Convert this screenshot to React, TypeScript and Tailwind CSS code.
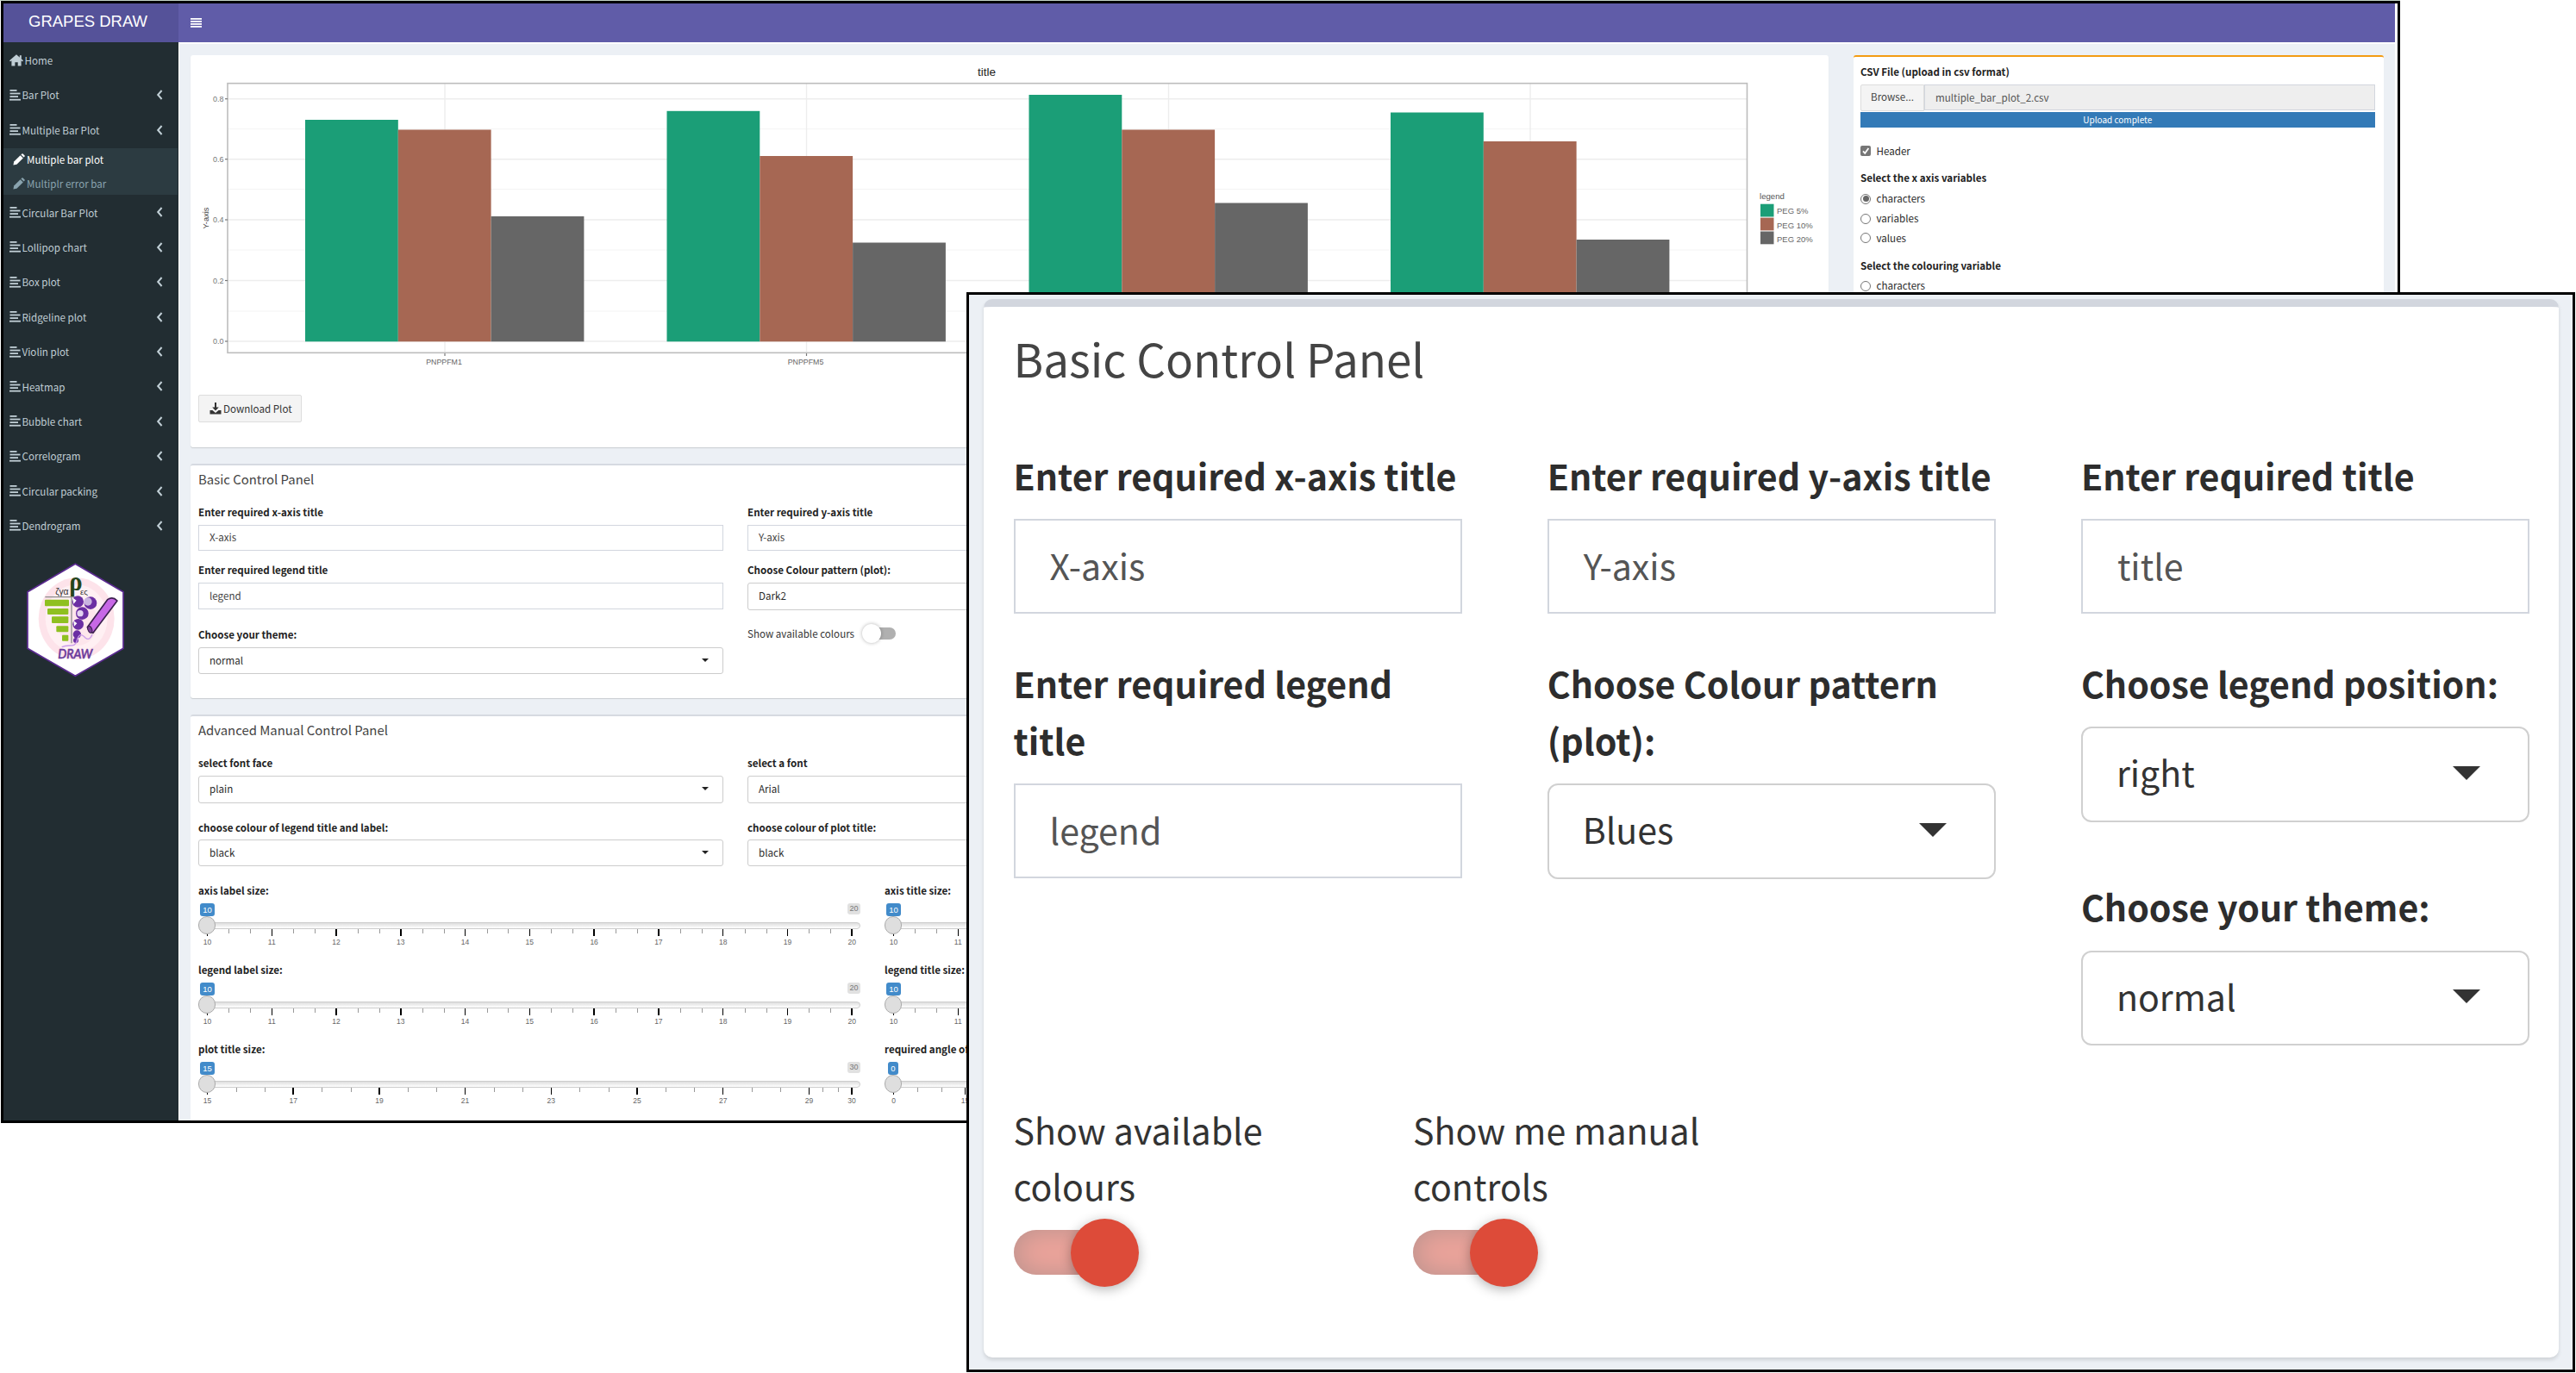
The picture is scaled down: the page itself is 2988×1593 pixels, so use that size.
import React from "react";

const menuTop = ["Bar Plot", "Multiple Bar Plot"];
const menuRest = [
  "Circular Bar Plot",
  "Lollipop chart",
  "Box plot",
  "Ridgeline plot",
  "Violin plot",
  "Heatmap",
  "Bubble chart",
  "Correlogram",
  "Circular packing",
  "Dendrogram",
];

/* ---------- icons ---------- */

function AlignIcon() {
  return (
    <svg viewBox="0 0 13 13" className="h-[13px] w-[13px] fill-current">
      <rect x="0.5" y="0" width="8" height="1.8" />
      <rect x="0.5" y="3.6" width="12" height="1.8" />
      <rect x="0.5" y="7.2" width="9.5" height="1.8" />
      <rect x="0" y="10.8" width="13" height="1.8" />
    </svg>
  );
}

function HomeIcon() {
  return (
    <svg viewBox="0 0 16 14" className="h-[14px] w-4 fill-current">
      <path d="M8 0.3 16 7.2 15 8.4 13.6 7.3V13.4H9.7V9.3H6.4V13.4H2.4V7.3L1 8.4 0 7.2Z" />
      <rect x="11.8" y="1.2" width="2" height="4" />
    </svg>
  );
}

function PencilIcon() {
  return (
    <svg viewBox="0 0 14 14" className="h-[14px] w-[14px] fill-current">
      <path d="M0.4 13.6 1.2 9.6 8.6 2.2 11.8 5.4 4.4 12.8Z" />
      <path d="M9.4 1.4 10.4 0.4Q11 0 11.6 0.4L13.6 2.4Q14 3 13.6 3.6L12.6 4.6Z" />
    </svg>
  );
}

function Chevron() {
  return (
    <svg viewBox="0 0 8 12" className="h-3 w-2 fill-none stroke-current stroke-2">
      <path d="M6.6 1 2.2 6l4.400 5" />
    </svg>
  );
}

function Logo() {
  return (
    <svg viewBox="0 0 480 480" className="mt-[9px] ml-[6px] h-40 w-40">
      <polygon points="232,46 399,143 399,340 232,436 66,340 66,143" fill="#fff" stroke="#5b2a91" strokeWidth="5" />
      <ellipse cx="236" cy="236" rx="132" ry="142" fill="#fde3ea" />
      <ellipse cx="236" cy="236" rx="108" ry="118" fill="#fff0f3" />
      <ellipse cx="240" cy="250" rx="70" ry="80" fill="#fde6ec" />
      <path d="M127 161H240M219 163V322" stroke="#8d8d8d" strokeWidth="4" fill="none" />
      <g fill="#8fc021">
        <rect x="126" y="170" width="84" height="23" rx="3" />
        <rect x="135" y="201" width="73" height="21" rx="3" />
        <rect x="150" y="229" width="58" height="23" rx="3" />
        <rect x="166" y="262" width="42" height="21" rx="3" />
        <rect x="186" y="293" width="22" height="21" rx="3" />
      </g>
      <g fill="#6b2fa3">
        <circle cx="241" cy="177" r="20" />
        <circle cx="285" cy="182" r="22" />
        <circle cx="256" cy="218" r="22" />
        <circle cx="242" cy="256" r="19" />
        <circle cx="238" cy="291" r="14" />
        <circle cx="234" cy="312" r="9" />
      </g>
      <circle cx="276" cy="177" r="14" fill="#c9b4e0" />
      <circle cx="249" cy="218" r="11" fill="#e4d4f0" />
      <path d="M222 163l14 10-10 12zM226 243l12 10-10 10z" fill="#fff" />
      <path d="M185 335c25-12 45 5 52-20 8-30 18-25 30-12 12 10 20 0 24-12" stroke="#c99aea" strokeWidth="4" fill="none" />
      <path d="M344 170Q362 158 378 174L294 286Q280 284 274 266Z" fill="#c768e6" stroke="#3c2150" strokeWidth="5" strokeLinejoin="round" />
      <ellipse cx="283" cy="274" rx="7" ry="12" fill="#7b3e98" stroke="#3c2150" strokeWidth="3" transform="rotate(-20 283 274)" />
      <text x="163" y="153" fontSize="31" fill="#333" fontFamily="Liberation Sans, sans-serif">ζγα</text>
      <text x="211" y="139" fontSize="92" fontWeight="bold" fill="#24451b" fontFamily="Liberation Serif, serif" textLength="46" lengthAdjust="spacingAndGlyphs">ρ</text>
      <text x="249" y="153" fontSize="29" fill="#333" fontFamily="Liberation Sans, sans-serif">ες</text>
      <text x="172" y="375" fontSize="48" fontStyle="italic" fill="#6a3a9c" stroke="#6a3a9c" strokeWidth="2" textLength="120" lengthAdjust="spacingAndGlyphs" fontFamily="Lato, sans-serif">DRAW</text>
    </svg>
  );
}

/* ---------- sidebar ---------- */

function MenuItem({ label }: { label: string }) {
  return (
    <li className="flex h-[40.4px] items-center pr-[18.5px] pl-[6.5px]">
      <AlignIcon />
      <span className="ml-[2px] grow pt-[2px]">{label}</span>
      <Chevron />
    </li>
  );
}

function Sidebar() {
  return (
    <aside className="w-[203px] shrink-0 bg-[#222d32] text-[11.6px] whitespace-nowrap text-[#c0ced5]">
      <ul>
        <li className="flex h-[41px] items-center pt-px pl-[6.5px]">
          <HomeIcon />
          <span className="ml-[2px] pt-[2px]">Home</span>
        </li>
        {menuTop.map((m) => (
          <MenuItem key={m} label={m} />
        ))}
        <ul className="mt-px mr-px h-[54.5px] bg-[#2c3b41] pl-[11px] text-[#8aa4af]">
          <li className="flex h-[27px] items-center gap-[2px] text-white">
            <PencilIcon />
            <span className="pt-[2px]">Multiple bar plot</span>
          </li>
          <li className="flex h-7 items-center gap-[2px]">
            <PencilIcon />
            <span className="pt-[2px]">Multiplr error bar</span>
          </li>
        </ul>
        {menuRest.map((m) => (
          <MenuItem key={m} label={m} />
        ))}
      </ul>
      <Logo />
    </aside>
  );
}

/* ---------- chart ---------- */

const groups = [
  { x: 354, label: "PNPPFM1", tops: [139, 150.5, 251] },
  { x: 773.5, label: "PNPPFM5", tops: [128.8, 181, 281.5] },
  { x: 1193.5, label: "", tops: [110, 150.5, 235.5] },
  { x: 1613, label: "", tops: [130.5, 164, 278] },
];
const barColors = ["#1b9e77", "#a66753", "#666666"];
const legendRows = ["PEG 5%", "PEG 10%", "PEG 20%"];
const ticksY: [string, number][] = [
  ["0.8", 114.7],
  ["0.6", 184.7],
  ["0.4", 255],
  ["0.2", 325.5],
  ["0.0", 396],
];

function Chart() {
  return (
    <svg viewBox="221 64 1900 394" className="block h-[394px] w-[1900px]" fontFamily="Liberation Sans, sans-serif">
      <text x="1144.5" y="87.5" fontSize="13.5" textAnchor="middle" fill="#222">title</text>
      {ticksY.map(([, y]) => (
        <path key={y} d={`M264 ${y}H2026`} stroke="#ededed" strokeWidth="1.4" />
      ))}
      {[149.7, 219.5, 290, 361].map((y) => (
        <path key={y} d={`M264 ${y}H2026`} stroke="#f4f4f4" strokeWidth="1" />
      ))}
      {groups.map((g) => (
        <g key={g.x}>
          <path d={`M${g.x + 162} 97V409`} stroke="#ededed" strokeWidth="1.4" />
          {g.tops.map((t, i) => (
            <rect key={i} x={g.x + i * 107.8} y={t} width="107.8" height={396.3 - t} fill={barColors[i]} />
          ))}
          <path d={`M${g.x + 162} 409v4`} stroke="#777" strokeWidth="1.2" />
          {g.label && (
            <text x={g.x + 161} y="423" fontSize="8.8" textAnchor="middle" fill="#666">{g.label}</text>
          )}
        </g>
      ))}
      <rect x="264" y="96.7" width="1762.5" height="312.6" fill="none" stroke="#bdbdbd" strokeWidth="1.6" />
      {ticksY.map(([t, y]) => (
        <g key={t}>
          <path d={`M261 ${y}h3`} stroke="#777" strokeWidth="1.2" />
          <text x="259.5" y={y + 3.3} fontSize="9" textAnchor="end" fill="#777">{t}</text>
        </g>
      ))}
      <text transform="translate(241.5 253) rotate(-90)" fontSize="9.3" textAnchor="middle" fill="#444">Y-axis</text>
      <text x="2041" y="231" fontSize="9.6" fill="#555">legend</text>
      {legendRows.map((l, i) => (
        <g key={l}>
          <rect x="2042" y={236.7 + i * 15.9} width="15.5" height="14.8" fill={barColors[i]} />
          <text x="2061" y={248.4 + i * 16.1} fontSize="9.5" fill="#666">{l}</text>
        </g>
      ))}
    </svg>
  );
}

/* ---------- small form pieces ---------- */

function Label({ children, className = "" }: { children: React.ReactNode; className?: string }) {
  return (
    <div className={`flex items-center font-bold whitespace-nowrap text-[#222] ${className}`}>
      <span className="pt-[2px]">{children}</span>
    </div>
  );
}

function Input({ value }: { value: string }) {
  return (
    <div className="flex h-[30.5px] items-center border border-[#d2d6de] pt-px pl-3 text-[#444]">{value}</div>
  );
}

function Select({ value }: { value: string }) {
  return (
    <div className="flex h-[31.5px] items-center rounded-[3px] border border-[#ccc] pr-4 pl-3 text-[#2a2a2a]">
      <span className="grow pt-px">{value}</span>
      <svg viewBox="0 0 8 4" className="mb-px h-1 w-2">
        <path d="M0 0h8L4 4z" fill="#222" />
      </svg>
    </div>
  );
}

type SliderProps = {
  label: string;
  badge: string;
  max: string;
  ticks: [number, string][];
  minor: number[];
  narrow?: boolean;
};

function Slider({ label, badge, max, ticks, minor, narrow }: SliderProps) {
  return (
    <div className="h-[92px] w-[768px]">
      <Label className="h-5">{label}</Label>
      <div className="relative h-[72px] font-['Liberation_Sans',sans-serif]">
        <div className="absolute top-[27px] left-[5px] h-2 w-[763px] rounded-[4px] border border-[#ccc] bg-gradient-to-b from-[#dedede] to-white" />
        {minor.map((x) => (
          <span key={x} className="absolute top-[35px] h-[5px] w-px bg-[#999]" style={{ left: x }} />
        ))}
        {ticks.map(([x, t]) => (
          <span key={x} className="absolute top-[35px] flex w-5 -translate-x-1/2 flex-col items-center" style={{ left: x }}>
            <span className="h-2 w-[1.5px] bg-black" />
            <span className="mt-[3px] text-[8.5px] leading-[9px] text-[#666]">{t}</span>
          </span>
        ))}
        <span
          className={`absolute top-[5px] flex h-[15px] items-center justify-center rounded-[3px] bg-[#428bca] text-[9.5px] text-white ${narrow ? "left-[4px] w-3" : "left-[2px] w-[17px]"}`}
        >
          {badge}
        </span>
        <span className="absolute top-[5px] right-0 flex h-[13px] w-[15px] items-center justify-center rounded-[3px] bg-[#e1e1e1] text-[9px] text-[#777]">
          {max}
        </span>
        <span className="absolute top-5 left-0 h-[21px] w-5 rounded-full border border-[#ababab] bg-[#dedede]" />
      </div>
    </div>
  );
}

const step = 74.77;
const tenTicks: [number, string][] = Array.from({ length: 11 }, (_, i) => [10.5 + i * step, String(10 + i)]);
const tenMinor = Array.from({ length: 30 }, (_, i) => i)
  .filter((i) => i % 3 !== 0)
  .map((i) => 10.5 + (i * step) / 3);
const plotTicks: [number, string][] = [
  ...[15, 17, 19, 21, 23, 25, 27, 29].map((v, i): [number, string] => [10.5 + i * 99.7, String(v)]),
  [758, "30"],
];
const plotMinor = [...Array.from({ length: 21 }, (_, i) => i).filter((i) => i % 3 !== 0).map((i) => 10.5 + i * 33.23), 724, 741.5];
const angleTicks: [number, string][] = Array.from({ length: 10 }, (_, i) => [10.5 + i * 83.1, String(i * 15)]);
const angleMinor = Array.from({ length: 27 }, (_, i) => i).filter((i) => i % 3 !== 0).map((i) => 10.5 + i * 27.7);

function Radio({ label, on }: { label: string; on?: boolean }) {
  return (
    <div className="flex h-[22.8px] items-center">
      <span className="flex h-3 w-3 items-center justify-center rounded-full border border-[#767676] bg-white">
        {on && <span className="h-[7px] w-[7px] rounded-full bg-[#666]" />}
      </span>
      <span className="ml-[6.5px]">{label}</span>
    </div>
  );
}

/* ---------- cards ---------- */

function BasicCard() {
  return (
    <section className="mt-[19.5px] h-[272px] rounded-[3px] border-t-2 border-[#d6dae1] bg-white pl-[9px] shadow-[0_1px_1px_rgba(0,0,0,0.15)]">
      <h3 className="flex h-[31px] items-center pt-px text-[14.9px] text-[#444]">Basic Control Panel</h3>
      <div className="mt-[7.5px] grid grid-cols-[608.5px_608.5px_608.5px] gap-x-[28.5px]">
        <div>
          <Label className="h-[30px]">Enter required x-axis title</Label>
          <Input value="X-axis" />
          <Label className="mt-[7px] h-[30px]">Enter required legend title</Label>
          <Input value="legend" />
          <Label className="mt-[14px] h-[30px]">Choose your theme:</Label>
          <Select value="normal" />
        </div>
        <div>
          <Label className="h-[30px]">Enter required y-axis title</Label>
          <Input value="Y-axis" />
          <Label className="mt-[7px] h-[30px]">Choose Colour pattern (plot):</Label>
          <Select value="Dark2" />
          <div className="mt-[12px] flex h-[30px] items-center text-[#333]">
            <span className="pt-[2px] whitespace-nowrap">Show available colours</span>
            <span className="relative ml-[16px] h-[14px] w-[32px] rounded-full bg-[#b0b0b0]">
              <span className="absolute -top-[4px] -left-[7px] h-[22px] w-[22px] rounded-full bg-white shadow-[0_0_4px_rgba(0,0,0,0.3)]" />
            </span>
          </div>
        </div>
      </div>
    </section>
  );
}

function AdvancedCard() {
  return (
    <section className="mt-[19px] h-[520px] rounded-[3px] border-t-2 border-[#d6dae1] bg-white pl-[9px]">
      <h3 className="flex h-[31px] items-center pt-px text-[14.9px] text-[#444]">Advanced Manual Control Panel</h3>
      <div className="mt-2 grid grid-cols-[608.5px_608.5px_608.5px] gap-x-[28.5px]">
        <div>
          <Label className="h-[30px]">select font face</Label>
          <Select value="plain" />
          <Label className="mt-[14px] h-[28px]">choose colour of legend title and label:</Label>
          <Select value="black" />
        </div>
        <div>
          <Label className="h-[30px]">select a font</Label>
          <Select value="Arial" />
          <Label className="mt-[14px] h-[28px]">choose colour of plot title:</Label>
          <Select value="black" />
        </div>
      </div>
      <div className="mt-[18px] grid grid-cols-[768px_768px] gap-x-[28px]">
        <Slider label="axis label size:" badge="10" max="20" ticks={tenTicks} minor={tenMinor} />
        <Slider label="axis title size:" badge="10" max="20" ticks={tenTicks} minor={tenMinor} />
        <Slider label="legend label size:" badge="10" max="20" ticks={tenTicks} minor={tenMinor} />
        <Slider label="legend title size:" badge="10" max="20" ticks={tenTicks} minor={tenMinor} />
        <Slider label="plot title size:" badge="15" max="30" ticks={plotTicks} minor={plotMinor} />
        <Slider label="required angle of axis label:" badge="0" max="135" ticks={angleTicks} minor={angleMinor} narrow />
      </div>
    </section>
  );
}

function UploadCard() {
  return (
    <section className="w-[614.5px] shrink-0 rounded-[3px] border-t-2 border-[#f39c12] bg-white pt-[2px] pr-[10px] pl-[8px] text-[#2a2a2a]">
      <Label className="h-[30px]">CSV File (upload in csv format)</Label>
      <div className="flex items-start">
        <span className="flex h-[31px] w-[74px] items-center justify-center rounded-l-[2px] border border-[#ddd] bg-[#f4f4f4] pb-px text-[#444]">
          Browse...
        </span>
        <span className="flex h-[30px] grow items-center border border-[#d2d6de] bg-[#eee] pt-[2px] pl-3 text-[#555]">
          multiple_bar_plot_2.csv
        </span>
      </div>
      <div className="mt-px flex h-[17.5px] items-center justify-center bg-[#337ab7] text-[10px] text-white">
        Upload complete
      </div>
      <div className="mt-4 flex h-[23px] items-center">
        <svg viewBox="0 0 12 12" className="h-3 w-3">
          <rect width="12" height="12" rx="2" fill="#767676" />
          <path d="M3 6.4 5.2 8.8 9.4 3" fill="none" stroke="#fff" strokeWidth="1.8" />
        </svg>
        <span className="ml-[6.5px] pt-[2px]">Header</span>
      </div>
      <Label className="mt-[6px] h-[27px]">Select the x axis variables</Label>
      <Radio label="characters" on />
      <Radio label="variables" />
      <Radio label="values" />
      <Label className="mt-[6px] h-[27px]">Select the colouring variable</Label>
      <Radio label="characters" />
    </section>
  );
}

/* ---------- enlarged control panel ---------- */

function BigLabel({ children, className = "" }: { children: React.ReactNode; className?: string }) {
  return <div className={`leading-[66px] font-bold text-[#2d2d2d] ${className}`}>{children}</div>;
}

function BigInput({ value }: { value: string }) {
  return (
    <div className="mt-[18.5px] flex h-[110px] items-center border-2 border-[#d2d6de] pb-[3px] pl-10 text-[#555]">{value}</div>
  );
}

function BigSelect({ value }: { value: string }) {
  return (
    <div className="mt-[18.5px] flex h-[110.5px] items-center rounded-[12px] border-2 border-[#d0d0d0] pr-[55px] pl-[39px] text-[#333]">
      <span className="grow pb-[5px]">{value}</span>
      <svg viewBox="0 0 32 16" className="mb-[3px] h-4 w-8">
        <path d="M0 0h32L16 16z" fill="#333" />
      </svg>
    </div>
  );
}

function BigToggle({ label }: { label: string }) {
  return (
    <div className="w-[463.5px]">
      <div className="w-[380px] leading-[65px] text-[#333]">{label}</div>
      <div className="mt-[6px] flex h-[79px] items-center">
        <span className="h-[52.5px] w-[130px] rounded-[26px] bg-[#dd4b39] opacity-50 shadow-[inset_0_0_32px_rgba(0,0,0,0.5)]" />
        <span className="relative -ml-[64px] h-[79px] w-[79px] rounded-full bg-[#dd4b39] shadow-[0_3px_14px_rgba(0,0,0,0.3)]" />
      </div>
    </div>
  );
}

function ZoomedPanel() {
  return (
    <div className="absolute top-[339px] left-[1121px] h-[1253px] w-[1866px] border-3 border-black bg-[#ecf0f5] pt-[4.5px] pl-[17px] text-[41.1px]">
      <div className="h-[1228.5px] w-[1826.5px] rounded-[10px] border-t-[9.5px] border-[#d2d6de] bg-white pl-[34.5px] shadow-[0_3px_4px_rgba(0,0,0,0.12)]">
        <h2 className="pt-[29px] text-[52.9px] leading-[60px] text-[#444]">Basic Control Panel</h2>
        <div className="mt-[73px] grid h-[760px] grid-cols-[520px_520px_520px] gap-x-[99.2px]">
          <div>
            <BigLabel>Enter required x-axis title</BigLabel>
            <BigInput value="X-axis" />
            <BigLabel className="mt-[46.5px]">Enter required legend title</BigLabel>
            <BigInput value="legend" />
          </div>
          <div>
            <BigLabel>Enter required y-axis title</BigLabel>
            <BigInput value="Y-axis" />
            <BigLabel className="mt-[46.5px]">Choose Colour pattern (plot):</BigLabel>
            <BigSelect value="Blues" />
          </div>
          <div>
            <BigLabel>Enter required title</BigLabel>
            <BigInput value="title" />
            <BigLabel className="mt-[46.5px]">Choose legend position:</BigLabel>
            <BigSelect value="right" />
            <BigLabel className="mt-[64.500px]">Choose your theme:</BigLabel>
            <BigSelect value="normal" />
          </div>
        </div>
        <div className="flex">
          <BigToggle label="Show available colours" />
          <BigToggle label="Show me manual controls" />
        </div>
      </div>
    </div>
  );
}

export default function App() {
  return (
    <div className="relative h-[1593px] w-[2988px] overflow-hidden bg-white font-['Noto_Sans_CJK_SC','Noto_Sans',sans-serif] text-[11.6px] leading-none">
      <div className="h-px w-[2784px] bg-[#c3d3c6]" />
      <div className="ml-px flex h-[1302px] w-[2783px] flex-col overflow-hidden border-3 border-black bg-white">
        <header className="flex h-[45px] w-[2774px] shrink-0 items-center bg-[#605ca8] text-white">
          <div className="flex h-full w-[203px] items-center bg-[#555299] pb-[3px] pl-[29px] font-['Liberation_Sans',sans-serif] text-[18.5px]">
            GRAPES DRAW
          </div>
          <svg viewBox="0 0 13 11" className="ml-[14px] h-[11px] w-[13px] fill-white">
            <rect width="13" height="1.8" />
            <rect y="3" width="13" height="1.8" />
            <rect y="6" width="13" height="1.8" />
            <rect y="9" width="13" height="1.8" />
          </svg>
        </header>
        <div className="flex w-[2774px] grow overflow-hidden">
          <Sidebar />
          <main className="flex grow items-stretch gap-[29px] border-t-2 border-l border-white bg-[#ecf0f5] pt-[13px] pl-[13px]">
            <div className="w-[1900px] shrink-0">
              <section className="h-[454.5px] rounded-[3px] bg-white shadow-[0_1px_1px_rgba(0,0,0,0.15)]">
                <Chart />
                <button className="ml-[9px] flex h-8 w-[120px] items-center rounded-[2px] border border-[#ddd] bg-[#f4f4f4] pl-3 whitespace-nowrap text-[#333]">
                  <svg viewBox="0 0 14 14" className="h-[14px] w-[14px] fill-[#333]">
                    <path d="M6 0h2v5.500h2.800L7 9.400 3.200 5.500H6z" />
                    <path d="M0.500 9h3L7 12l3.500-3h3v4.500h-13z" />
                  </svg>
                  <span className="ml-[2px] pt-[2px]">Download Plot</span>
                </button>
              </section>
              <BasicCard />
              <AdvancedCard />
            </div>
            <UploadCard />
          </main>
        </div>
      </div>
      <ZoomedPanel />
    </div>
  );
}
